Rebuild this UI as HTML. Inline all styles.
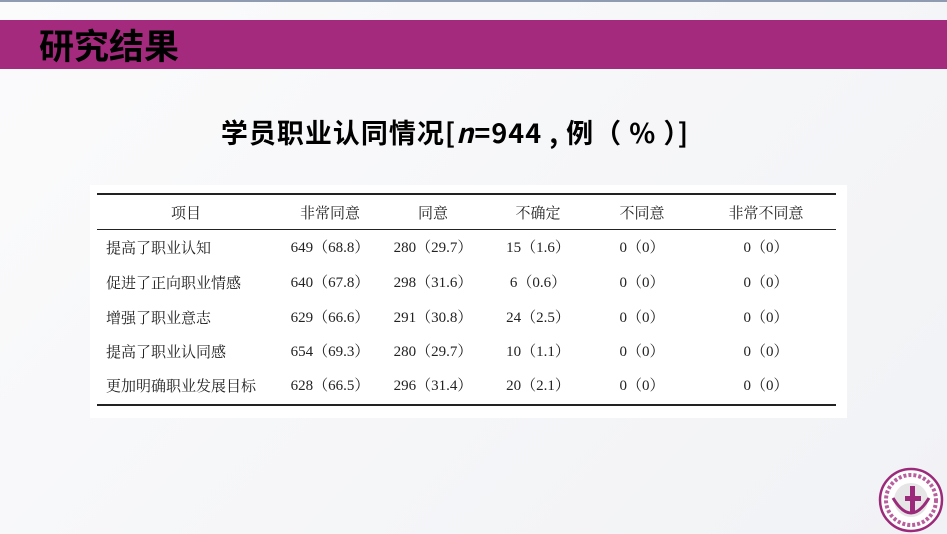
<!DOCTYPE html>
<html><head><meta charset="utf-8"><style>
body{margin:0;width:947px;height:534px;background:linear-gradient(135deg,#fbfbfc,#f1f2f5);position:relative;overflow:hidden;font-family:"Liberation Sans","Noto Sans CJK SC",sans-serif}
.top{position:absolute;left:0;top:0;width:947px;height:2px;background:#8e9bb0}
.bar{position:absolute;left:0;top:20px;width:947px;height:49px;background:#a42a7d}
.bar span{position:absolute;left:39px;top:2px;font-size:35px;font-weight:bold;color:#000;font-family:"Noto Sans CJK SC",sans-serif;line-height:45px}
.title{position:absolute;left:0;width:910px;top:112px;text-align:center;font-size:27px;font-weight:bold;color:#000;font-family:"Noto Sans CJK SC",sans-serif;letter-spacing:1px;white-space:nowrap}
.tb{position:absolute;left:90px;top:185px;width:757px;height:233px;background:#fff}
.l{position:absolute;left:7px;width:739px;background:#222}
.c{position:absolute;font-family:"Liberation Serif","Noto Serif CJK SC",serif;font-size:15px;color:#222;transform:translateX(-50%);white-space:nowrap;line-height:18px}
.f{position:absolute;left:16px;font-family:"Noto Serif CJK SC",serif;font-size:15px;color:#222;line-height:18px}
</style></head><body>
<div class="top"></div>
<div class="bar"><span>研究结果</span></div>
<div class="title">学员职业认同情况[<i>n</i>=944 , 例（ % ）]</div>
<div class="tb">
<div class="l" style="top:8px;height:2px"></div>
<div class="l" style="top:44px;height:1px"></div>
<div class="l" style="top:219px;height:2px"></div>
<div class="c" style="left:96px;top:19px;font-family:'Noto Serif CJK SC',serif">项目</div>
<div class="c" style="left:240px;top:19px;font-family:'Noto Serif CJK SC',serif">非常同意</div>
<div class="c" style="left:343px;top:19px;font-family:'Noto Serif CJK SC',serif">同意</div>
<div class="c" style="left:448px;top:19px;font-family:'Noto Serif CJK SC',serif">不确定</div>
<div class="c" style="left:552px;top:19px;font-family:'Noto Serif CJK SC',serif">不同意</div>
<div class="c" style="left:676px;top:19px;font-family:'Noto Serif CJK SC',serif">非常不同意</div>

<div class="f" style="top:54px">提高了职业认知</div>
<div class="c" style="left:240px;top:54px">649（68.8）</div><div class="c" style="left:343px;top:54px">280（29.7）</div><div class="c" style="left:448px;top:54px">15（1.6）</div><div class="c" style="left:552px;top:54px">0（0）</div><div class="c" style="left:676px;top:54px">0（0）</div>
<div class="f" style="top:89px">促进了正向职业情感</div>
<div class="c" style="left:240px;top:89px">640（67.8）</div><div class="c" style="left:343px;top:89px">298（31.6）</div><div class="c" style="left:448px;top:89px">6（0.6）</div><div class="c" style="left:552px;top:89px">0（0）</div><div class="c" style="left:676px;top:89px">0（0）</div>
<div class="f" style="top:124px">增强了职业意志</div>
<div class="c" style="left:240px;top:124px">629（66.6）</div><div class="c" style="left:343px;top:124px">291（30.8）</div><div class="c" style="left:448px;top:124px">24（2.5）</div><div class="c" style="left:552px;top:124px">0（0）</div><div class="c" style="left:676px;top:124px">0（0）</div>
<div class="f" style="top:158px">提高了职业认同感</div>
<div class="c" style="left:240px;top:158px">654（69.3）</div><div class="c" style="left:343px;top:158px">280（29.7）</div><div class="c" style="left:448px;top:158px">10（1.1）</div><div class="c" style="left:552px;top:158px">0（0）</div><div class="c" style="left:676px;top:158px">0（0）</div>
<div class="f" style="top:192px">更加明确职业发展目标</div>
<div class="c" style="left:240px;top:192px">628（66.5）</div><div class="c" style="left:343px;top:192px">296（31.4）</div><div class="c" style="left:448px;top:192px">20（2.1）</div><div class="c" style="left:552px;top:192px">0（0）</div><div class="c" style="left:676px;top:192px">0（0）</div>
</div>
<svg style="position:absolute;left:876px;top:466px" width="70" height="68" viewBox="0 0 70 68">
<circle cx="35" cy="34" r="31" fill="#fff" stroke="#9b2a7a" stroke-width="2.5"/>
<circle cx="35" cy="34" r="25" fill="none" stroke="#b8609e" stroke-width="4" stroke-dasharray="3 2"/>
<circle cx="35" cy="34" r="17" fill="#e6e6e6"/>
<rect x="34" y="20" width="5" height="26" fill="#9b2a7a"/>
<rect x="29" y="30" width="16" height="5" fill="#9b2a7a"/>
<path d="M17 32 Q35 62 53 32" fill="none" stroke="#9b2a7a" stroke-width="3"/>
</svg>
</body></html>
